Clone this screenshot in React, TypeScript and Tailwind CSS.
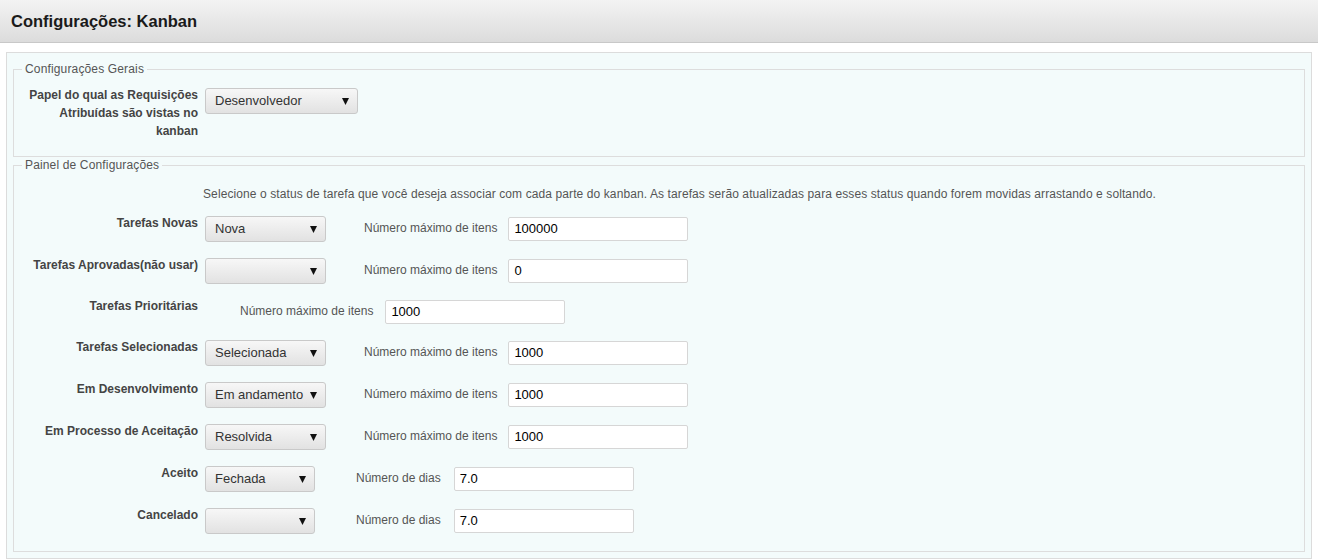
import React from 'react';

type SelectProps = { value: string; width: string };

const FakeSelect: React.FC<SelectProps> = ({ value, width }) => (
  <div
    className={`${width} h-[26px] mt-[2px] flex items-center justify-between pl-[9px] pr-[8px] rounded-[3px] border border-[#c9c9c9] bg-gradient-to-b from-[#f7f7f7] to-[#e2e2e2] text-[13px] text-[#333] shrink-0`}
  >
    <span>{value}</span>
    <svg width="7" height="8" viewBox="0 0 7 8" className="shrink-0">
      <path d="M0 1 L7 1 L3.5 8 Z" fill="#111" />
    </svg>
  </div>
);

const NumberField: React.FC<{ label: string; value: string; ml: string; gap: string }> = ({ label, value, ml, gap }) => (
  <div className={`flex items-start ${ml}`}>
    <span className="mt-[5px] leading-[18px] text-[12px] text-[#555] whitespace-nowrap">{label}</span>
    <div className={`${gap} mt-[3px] w-[180px] h-[24px] bg-white border border-[#d6d6d6] rounded-[2px] flex items-center pl-[5px] text-[13px] text-black`}>
      {value}
    </div>
  </div>
);

interface Row {
  label: string;
  select?: { value: string; width: string };
  field: { label: string; value: string; ml: string; gap: string };
  height: string;
}

const rows: Row[] = [
  { label: 'Tarefas Novas', select: { value: 'Nova', width: 'w-[121px]' }, field: { label: 'Número máximo de itens', value: '100000', ml: 'ml-[38px]', gap: 'ml-[11px]' }, height: 'h-[42px]' },
  { label: 'Tarefas Aprovadas(não usar)', select: { value: '', width: 'w-[121px]' }, field: { label: 'Número máximo de itens', value: '0', ml: 'ml-[38px]', gap: 'ml-[11px]' }, height: 'h-[41px]' },
  { label: 'Tarefas Prioritárias', field: { label: 'Número máximo de itens', value: '1000', ml: 'ml-[42px]', gap: 'ml-[12px]' }, height: 'h-[41px]' },
  { label: 'Tarefas Selecionadas', select: { value: 'Selecionada', width: 'w-[121px]' }, field: { label: 'Número máximo de itens', value: '1000', ml: 'ml-[38px]', gap: 'ml-[11px]' }, height: 'h-[42px]' },
  { label: 'Em Desenvolvimento', select: { value: 'Em andamento', width: 'w-[121px]' }, field: { label: 'Número máximo de itens', value: '1000', ml: 'ml-[38px]', gap: 'ml-[11px]' }, height: 'h-[42px]' },
  { label: 'Em Processo de Aceitação', select: { value: 'Resolvida', width: 'w-[121px]' }, field: { label: 'Número máximo de itens', value: '1000', ml: 'ml-[38px]', gap: 'ml-[11px]' }, height: 'h-[42px]' },
  { label: 'Aceito', select: { value: 'Fechada', width: 'w-[110px]' }, field: { label: 'Número de dias', value: '7.0', ml: 'ml-[41px]', gap: 'ml-[13px]' }, height: 'h-[42px]' },
  { label: 'Cancelado', select: { value: '', width: 'w-[110px]' }, field: { label: 'Número de dias', value: '7.0', ml: 'ml-[41px]', gap: 'ml-[13px]' }, height: 'h-[42px]' },
];

export default function App() {
  return (
    <div className="w-[1318px] h-[560px] bg-white font-['Liberation_Sans',Arial,sans-serif] overflow-hidden">
      {/* Header */}
      <div className="h-[43px] border-b border-[#c8c8c8] bg-gradient-to-b from-[#f3f3f3] to-[#dcdcdc] flex items-center pl-[11px]">
        <h1 className="text-[16.5px] font-bold text-[#1a1a1a]">Configurações: Kanban</h1>
      </div>

      <div className="mx-[6px] mt-[9px] border border-[#dcdcdc] bg-[#f3fbfb] px-[6px] pt-[9px] pb-[6px]">
        {/* Configurações Gerais */}
        <fieldset className="border border-[#dddddd] pt-[10px] pb-[16px]">
          <legend className="ml-[8px] px-[3px] text-[12px] leading-[14px] tracking-[0.15px] text-[#555]">Configurações Gerais</legend>
          <div className="flex items-start">
            <div className="w-[184px] pl-[10px] text-right text-[12px] leading-[18px] font-bold text-[#444]">
              Papel do qual as Requisições Atribuídas são vistas no kanban
            </div>
            <div className="ml-[7px]">
              <FakeSelect value="Desenvolvedor" width="w-[153px]" />
            </div>
          </div>
        </fieldset>

        {/* Painel de Configurações */}
        <fieldset className="mt-[1px] border border-[#dddddd] pt-[13px] pb-[3px]">
          <legend className="ml-[8px] px-[3px] text-[12px] leading-[14px] tracking-[0.15px] text-[#555]">Painel de Configurações</legend>
          <p className="ml-[189px] text-[12px] leading-[18px] tracking-[0.1px] text-[#555]">
            Selecione o status de tarefa que você deseja associar com cada parte do kanban. As tarefas serão atualizadas para esses status quando forem movidas arrastando e soltando.
          </p>
          <div className="mt-[11px] flex flex-col">
            {rows.map((r) => (
              <div key={r.label} className={`flex items-start ${r.height}`}>
                <div className="w-[184px] pl-[10px] text-right text-[12px] leading-[18px] font-bold text-[#444] whitespace-nowrap">
                  {r.label}
                </div>
                {r.select && (
                  <div className="ml-[7px]">
                    <FakeSelect value={r.select.value} width={r.select.width} />
                  </div>
                )}
                <NumberField label={r.field.label} value={r.field.value} ml={r.field.ml} gap={r.field.gap} />
              </div>
            ))}
          </div>
        </fieldset>
      </div>
    </div>
  );
}
